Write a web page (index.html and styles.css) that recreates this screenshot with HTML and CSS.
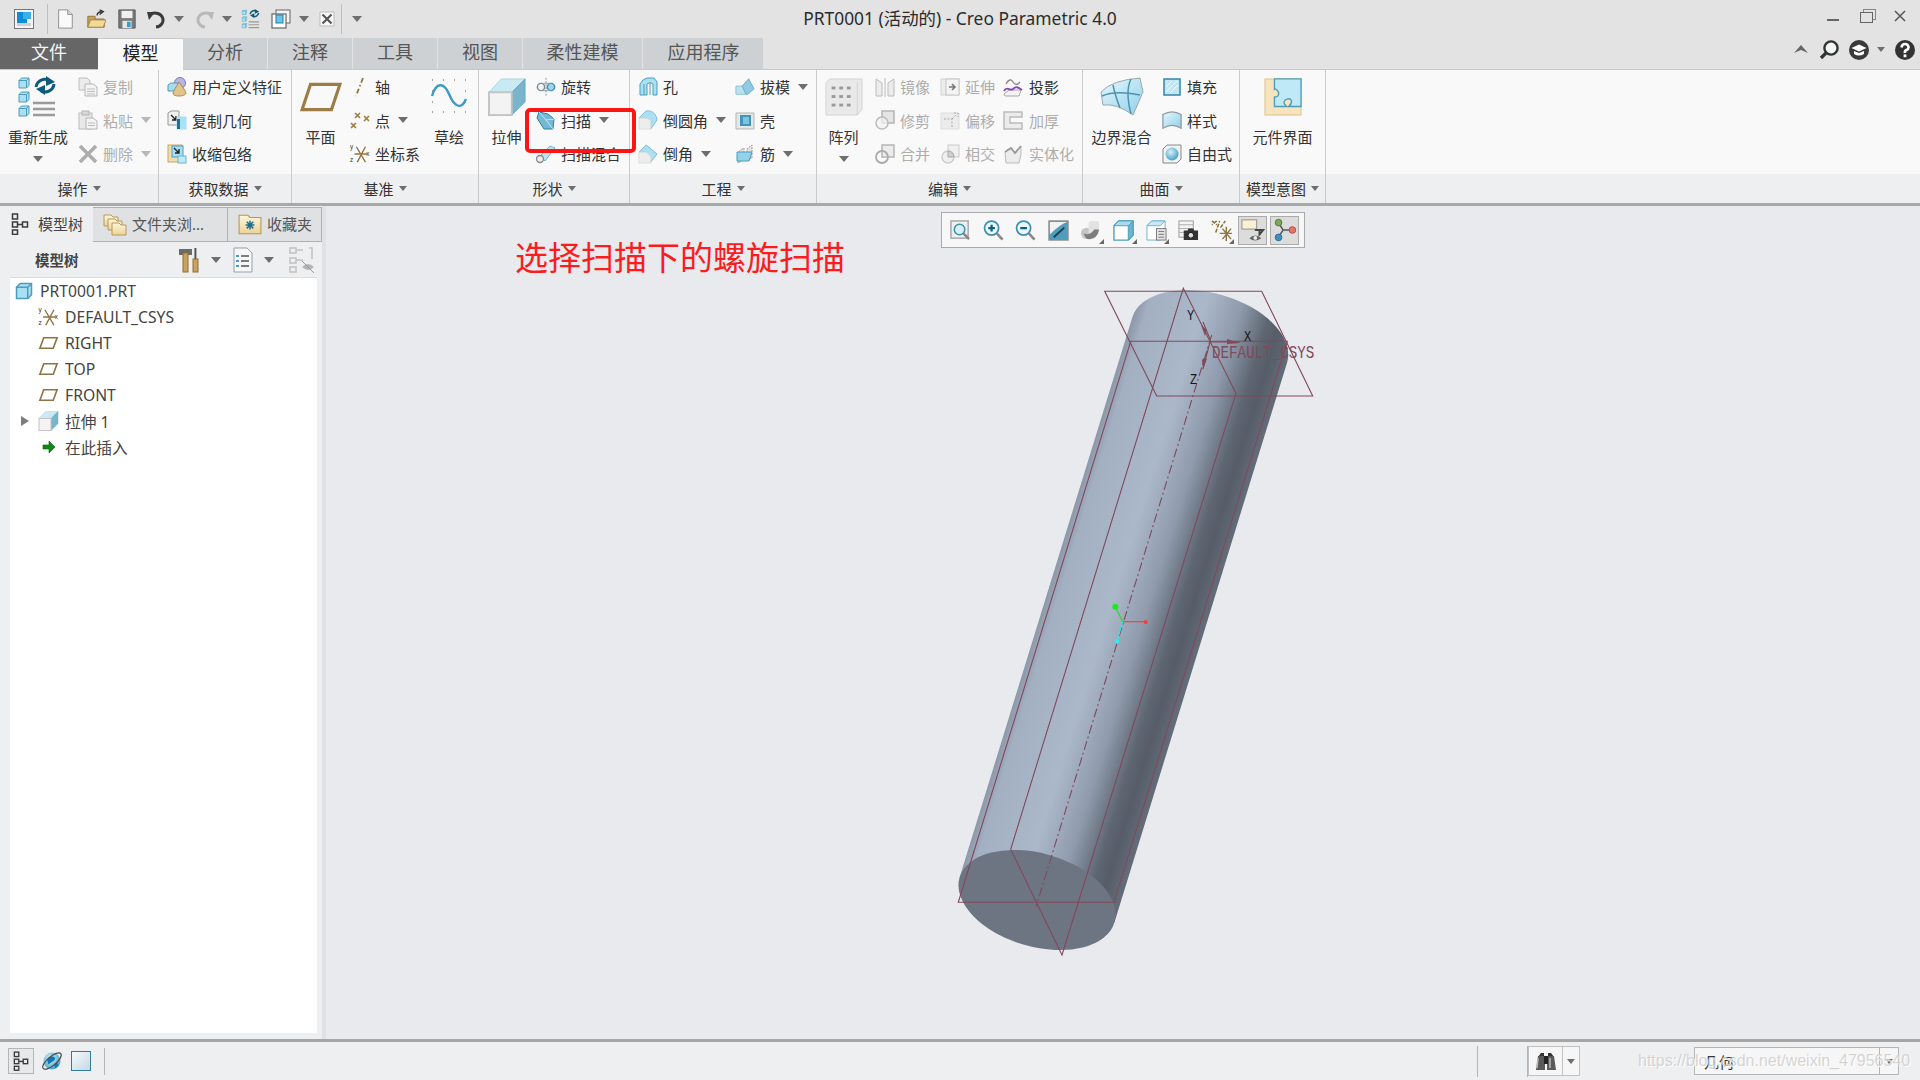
FILE: index.html
```html
<!DOCTYPE html>
<html lang="zh-CN">
<head>
<meta charset="utf-8">
<title>PRT0001 (活动的) - Creo Parametric 4.0</title>
<link rel="stylesheet" href="styles.css">
</head>
<body>
<svg class="sprite" aria-hidden="true">
<defs>
<linearGradient id="gBlue" x1="0" y1="0" x2="1" y2="1"><stop offset="0" stop-color="#e8f7fc"/><stop offset="1" stop-color="#8fd0ea"/></linearGradient>
<linearGradient id="gGray" x1="0" y1="0" x2="1" y2="1"><stop offset="0" stop-color="#f6f6f6"/><stop offset="1" stop-color="#d9d9d9"/></linearGradient>
<linearGradient id="gFolder" x1="0" y1="0" x2="0" y2="1"><stop offset="0" stop-color="#fdf6dc"/><stop offset="1" stop-color="#ecd397"/></linearGradient>
<radialGradient id="gBall" cx=".4" cy=".35" r=".7"><stop offset="0" stop-color="#d8f2fb"/><stop offset="1" stop-color="#3b9cc4"/></radialGradient>
<linearGradient id="cyl" gradientUnits="userSpaceOnUse" x1="959.6" y1="876" x2="1114.4" y2="924">
<stop offset="0" stop-color="#8c97a8"/><stop offset=".07" stop-color="#a3b0c2"/><stop offset=".4" stop-color="#abb8ca"/><stop offset=".62" stop-color="#8f9bac"/><stop offset=".8" stop-color="#5e6672"/><stop offset=".88" stop-color="#565d69"/><stop offset="1" stop-color="#656d7a"/>
</linearGradient>

<symbol id="cube" viewBox="0 0 12 12"><path d="M1 3.5 3.5 1H11V8.5L8.5 11H1Z" fill="#a9e0f4" stroke="#4d9cba"/><path d="M1 3.5H8.5V11M8.5 3.5 11 1" fill="none" stroke="#4d9cba"/></symbol>

<symbol id="regen" viewBox="0 0 42 42"><use href="#cube" x="1" y="1" width="12" height="12"/><use href="#cube" x="1" y="15" width="12" height="12"/><use href="#cube" x="1" y="29" width="12" height="12"/><path d="M16 27H38M16 33H38M16 39H38" stroke="#9a9a9a" stroke-width="2.4"/><path d="M19 11A9 9 0 0 1 33 5" fill="none" stroke="#0f5a78" stroke-width="3"/><path d="M29 0 38 6 29 10Z" fill="#0f5a78"/><path d="M37 8A9 9 0 0 1 24 15" fill="none" stroke="#0f5a78" stroke-width="3"/><path d="M28 19 19 13 28 9Z" fill="#0f5a78"/></symbol>

<symbol id="copy" viewBox="0 0 20 20"><path d="M1 1H9L12 4V13H1Z" fill="#ececec" stroke="#bdbdbd"/><path d="M7 7H15L19 10V19H7Z" fill="#f4f4f4" stroke="#b5b5b5"/><path d="M9 12H17M9 14.5H17M9 17H17" stroke="#bdbdbd"/></symbol>
<symbol id="paste" viewBox="0 0 20 20"><rect x="1" y="3" width="13" height="16" fill="#e8e8e8" stroke="#bdbdbd"/><rect x="4" y="1" width="7" height="4" fill="#d8d8d8" stroke="#b5b5b5"/><path d="M8 8H15L19 11V19H8Z" fill="#f4f4f4" stroke="#b5b5b5"/><path d="M10 13H17M10 15.5H17" stroke="#bdbdbd"/></symbol>
<symbol id="del" viewBox="0 0 20 20"><path d="M2 2 18 18M18 2 2 18" stroke="#acacac" stroke-width="3.4"/></symbol>

<symbol id="udf" viewBox="0 0 20 20"><circle cx="13" cy="6" r="5.5" fill="#b9b5e4" stroke="#7c79b5"/><path d="M1 8 4 6H11V14H1Z" fill="#a9dcf0" stroke="#4d9cba"/><path d="M12 5C9 10 7 13 6 16Q6 19 12 19T19 16C18 13 15 9 12 5Z" fill="#e0c48c" stroke="#a98c52"/></symbol>
<symbol id="copygeo" viewBox="0 0 20 20"><path d="M1 3 4 1H12V15H1Z" fill="#f0f0f0" stroke="#999"/><path d="M4 5 9 10M9 6V10H5" stroke="#222" fill="none" stroke-width="1.4"/><rect x="10" y="7" width="9" height="12" fill="#a9e0f4" stroke="#a9e0f4"/><rect x="10" y="9" width="3" height="10" fill="#1f6f91"/></symbol>
<symbol id="shrink" viewBox="0 0 20 20"><rect x="1" y="1" width="14" height="17" fill="#efdcae" stroke="#c7a868"/><rect x="5" y="2" width="11" height="11" fill="#a9e0f4" stroke="#4d9cba"/><path d="M7 4 12 9M12 5V9H8" stroke="#222" fill="none" stroke-width="1.4"/><rect x="11" y="12" width="8" height="7" fill="#bfeafa" stroke="#6db4d0"/></symbol>

<symbol id="plane" viewBox="0 0 40 28"><path d="M10 2H38L30 26H2Z" fill="none" stroke="#9b7d45" stroke-width="3"/></symbol>
<symbol id="planeS" viewBox="0 0 22 14"><path d="M6 1.5H20L16 12.5H2Z" fill="none" stroke="#8f7443" stroke-width="1.7"/></symbol>
<symbol id="axis" viewBox="0 0 20 20"><path d="M13 1 6 19" stroke="#8f7443" stroke-width="1.8" stroke-dasharray="5 2.5 1.5 2.5" fill="none"/></symbol>
<symbol id="point" viewBox="0 0 20 20"><path d="M5 3 10 8M10 3 5 8M14 6 19 11M19 6 14 11M1 13 6 18M6 13 1 18" stroke="#9b7d45" stroke-width="1.7"/></symbol>
<symbol id="csys" viewBox="0 0 22 22"><path d="M7 3 17 20M17 3 8 20M5 11H19" stroke="#8f7443" stroke-width="1.5" fill="none"/><text x="0" y="6" class="mini">y</text><text x="18" y="13" class="mini">x</text><text x="0" y="20" class="mini">z</text></symbol>
<symbol id="sketch" viewBox="0 0 36 34"><path d="M1 1h1M12 1h1M23 1h1M34 1h1M1 12h1M34 12h1M1 23h1M34 23h1M1 33h1M12 33h1M23 33h1M34 33h1" stroke="#8a8a8a" stroke-width="1.4"/><path d="M1 17C5 3 13 3 18 15S30 32 35 20" fill="none" stroke="#3d9bc4" stroke-width="2.4"/></symbol>

<symbol id="extrude" viewBox="0 0 40 40"><path d="M1 15 14 1H39L25 15Z" fill="#c8eaf5" stroke="#a9d4e2"/><path d="M25 15 39 1V25L25 39Z" fill="#78b5cd" stroke="#6ba8c0"/><rect x="1" y="15" width="24" height="24" fill="#f3f3f3" stroke="#c4c4c4" stroke-width="2"/></symbol>
<symbol id="revolve" viewBox="0 0 22 20"><path d="M11 0V20" stroke="#888" stroke-dasharray="2 1.5"/><circle cx="5.5" cy="10" r="4" fill="#f3f3f3" stroke="#7f8a90" stroke-width="1.6"/><circle cx="16.5" cy="10" r="4" fill="#9ed6ec" stroke="#3d8dad" stroke-width="1.6"/><path d="M5 6H17M5 14H17" stroke="#7fa5b5"/></symbol>
<symbol id="sweep" viewBox="0 0 20 20"><path d="M3 2 12 4 18 9 17 19H8L1 8Z" fill="#74b9d6" stroke="#2d7fa3"/><path d="M3 2 10 10 17 19M10 10 18 9" stroke="#bfe6f4" fill="none"/></symbol>
<symbol id="blend" viewBox="0 0 20 20"><path d="M4 12 14 2 19 4 9 17Z" fill="#bfe2ef" stroke="#7fb0c4"/><circle cx="4" cy="15" r="3.5" fill="#eee" stroke="#8a8a8a" stroke-width="1.4"/></symbol>

<symbol id="hole" viewBox="0 0 20 20"><path d="M5 3 9 1H16L19 5V18H15V7Q12 4 9 7V18H2V7Z" fill="#a9e0f4" stroke="#4d9cba"/><path d="M6 7V18M12 6V18" stroke="#4d9cba"/></symbol>
<symbol id="draft" viewBox="0 0 22 20"><path d="M1 9H12V18H1Z" fill="#b9e3f2" stroke="#8cc1d6"/><path d="M8 9 15 1 21 12 14 18 12 18Z" fill="#8fcbe2" stroke="#6ea9c2"/></symbol>
<symbol id="round" viewBox="0 0 22 22"><path d="M1 9 9 1H13Q20 3 21 11L14 21V13Q13 9 9 9Z" fill="#a9e0f4" stroke="#7fb6cc"/><path d="M1 9H9Q13 9 14 13V21H1Z" fill="#ededed" stroke="#ddd"/></symbol>
<symbol id="shell" viewBox="0 0 20 20"><path d="M1 3H19V19H1Z" fill="#e6e6e6" stroke="#b5b5b5"/><rect x="5" y="5" width="11" height="11" fill="#3f97bf"/><rect x="8" y="7" width="6" height="7" fill="#7fc4de"/></symbol>
<symbol id="chamfer" viewBox="0 0 22 22"><path d="M1 9 9 1 21 11 14 20 9 9Z" fill="#a9e0f4" stroke="#7fb6cc"/><path d="M1 9H9L14 14V21H1Z" fill="#ededed" stroke="#ddd"/></symbol>
<symbol id="rib" viewBox="0 0 20 20"><path d="M3 19V8L9 4V15ZM17 14V1L12 5V16Z" fill="#e4e4e4" stroke="#9a9a9a" stroke-dasharray="2 1"/><path d="M2 8H17L14 17H2Z" fill="#92d3ec" stroke="#4d9cba"/></symbol>

<symbol id="pattern" viewBox="0 0 40 40"><path d="M1 5 5 1H39V33L34 39H1Z" fill="#e9e9e9" stroke="#d4d4d4"/><path d="M34 5V39" stroke="#d2d2d2"/><g fill="#9a9a9a"><rect x="7" y="9" width="4" height="3"/><rect x="15" y="9" width="4" height="3"/><rect x="23" y="9" width="4" height="3"/><rect x="7" y="18" width="4" height="3"/><rect x="15" y="18" width="4" height="3"/><rect x="23" y="18" width="4" height="3"/><rect x="7" y="27" width="4" height="3"/><rect x="15" y="27" width="4" height="3"/><rect x="23" y="27" width="4" height="3"/></g></symbol>
<symbol id="mirror" viewBox="0 0 20 20"><path d="M1 2 7 6V19H1ZM19 2 13 6V19H19Z" fill="#ececec" stroke="#bbb"/><path d="M10 1V20" stroke="#bbb"/></symbol>
<symbol id="extend" viewBox="0 0 20 20"><rect x="1" y="2" width="18" height="16" fill="#ececec" stroke="#d4d4d4"/><rect x="6" y="2" width="13" height="16" fill="#f4f4f4" stroke="#c4c4c4"/><path d="M9 10H15M12 7 15 10 12 13" stroke="#777" fill="none" stroke-width="1.6"/></symbol>
<symbol id="project" viewBox="0 0 20 20"><path d="M1 17 6 13H18L16 19H2Z" fill="#f4f4f4" stroke="#a5a5a5"/><path d="M1 14C4 8 7 15 10 12S15 10 19 13" fill="none" stroke="#8a4ab5" stroke-width="1.8"/><path d="M3 7Q7 0 10 5T17 5" fill="none" stroke="#8a8a8a" stroke-width="1.4"/></symbol>
<symbol id="trim" viewBox="0 0 20 20"><rect x="7" y="1" width="12" height="12" fill="#e4e4e4" stroke="#b5b5b5" stroke-width="1.5"/><circle cx="7" cy="13" r="6" fill="#f4f4f4" fill-opacity=".7" stroke="#bbb" stroke-width="1.5"/></symbol>
<symbol id="offset" viewBox="0 0 20 20"><path d="M1 3H19V19H1Z" fill="#ececec" stroke="#ddd"/><path d="M4 9 H12V18M12 9 17 4M14 3H18V7" fill="none" stroke="#aaa" stroke-dasharray="2 1.5"/></symbol>
<symbol id="thicken" viewBox="0 0 20 20"><path d="M1 2H19V7H7V13H19V19H1Z" fill="#ececec" stroke="#bbb" stroke-width="1.5"/></symbol>
<symbol id="merge" viewBox="0 0 20 20"><rect x="7" y="1" width="12" height="12" fill="#ececec" stroke="#b5b5b5" stroke-width="1.5"/><circle cx="7" cy="13" r="6" fill="none" stroke="#aaa" stroke-width="1.8"/></symbol>
<symbol id="intersect" viewBox="0 0 20 20"><rect x="8" y="1" width="11" height="12" fill="#f0f0f0" stroke="#ccc"/><circle cx="8" cy="13" r="6" fill="#f0f0f0" stroke="#ccc" stroke-width="1.4"/><path d="M8 7A6 6 0 0 1 14 13H8Z" fill="#d0d0d0" stroke="#aaa"/></symbol>
<symbol id="solidify" viewBox="0 0 20 20"><path d="M2 8 8 4 12 9 18 2V10L16 19H3Z" fill="#ececec" stroke="#bbb"/><path d="M2 8 8 4 12 9 18 2" fill="none" stroke="#999" stroke-width="1.8"/></symbol>

<symbol id="boundary" viewBox="0 0 44 40"><path d="M1 15Q12 3 40 1L43 15 33 38Q16 26 3 28Z" fill="url(#gBlue)" stroke="#9aa9ae"/><path d="M2 19Q15 13 40 18M13 8Q15 18 20 31M31 2Q25 14 31 37" fill="none" stroke="#4d93b0" stroke-width="1.5"/></symbol>
<symbol id="fillS" viewBox="0 0 20 20"><rect x="2" y="2" width="16" height="16" fill="#bfe7f5" stroke="#3d8dad" stroke-width="1.6"/><path d="M4 10 10 4M4 15 15 4M8 16 16 8" stroke="#f1fbff"/></symbol>
<symbol id="style" viewBox="0 0 22 22"><path d="M1 5Q11-1 21 5V20Q11 14 1 20Z" fill="url(#gBlue)" stroke="#8d9ba2" stroke-width="1.4"/></symbol>
<symbol id="free" viewBox="0 0 20 20"><path d="M1 5 5 1H19V15L15 19H1Z" fill="#f2f2f2" stroke="#888"/><circle cx="10" cy="10" r="6.5" fill="url(#gBall)"/></symbol>
<symbol id="comp" viewBox="0 0 40 40"><rect x="1" y="1" width="38" height="38" fill="#f5e4bd" stroke="#dcc28a"/><path d="M11 1H39V30H26C31 26 29 21 25 22S19 26 24 30H11V20C15 21 17 16 14 13S11 11 11 13Z" fill="#bfe9f6" stroke="#4d9cba" stroke-width="1.4"/></symbol>

<symbol id="app" viewBox="0 0 20 20"><rect x=".5" y=".5" width="19" height="19" fill="#f4f4f4" stroke="#777"/><rect x="3" y="3" width="10" height="11" fill="#0d8dd6"/><rect x="9" y="3" width="8" height="7" fill="#39b0ea"/><path d="M3 14H17V17H3Z" fill="#cfcfcf"/></symbol>
<symbol id="new" viewBox="0 0 20 22"><path d="M3 1H13L18 6V21H3Z" fill="#fafafa" stroke="#8a8a8a"/><path d="M13 1V6H18" fill="#ddd" stroke="#8a8a8a"/></symbol>
<symbol id="open" viewBox="0 0 22 22"><path d="M2 8H10V11H20V20H2Z" fill="#c69f5a" stroke="#8f6f35"/><path d="M5 12H22L19 20H2Z" fill="#f3d996" stroke="#a5844a"/><path d="M12 7Q13 3 17 3M15 1 19 3 15 6" fill="none" stroke="#333" stroke-width="1.5"/></symbol>
<symbol id="save" viewBox="0 0 20 22"><path d="M1 1H19V21H1Z" fill="#7a7a7a" stroke="#555"/><rect x="4" y="2" width="12" height="8" fill="#f0f0f0"/><rect x="5" y="13" width="10" height="8" fill="#e6e6e6"/><rect x="10" y="14" width="4" height="6" fill="#3d9bc4"/></symbol>
<symbol id="undo" viewBox="0 0 20 20"><path d="M4 5A8 7 0 1 1 9 18" fill="none" stroke="#3b3b3b" stroke-width="3"/><path d="M0 3H8L2 11Z" fill="#3b3b3b"/></symbol>
<symbol id="redo" viewBox="0 0 20 20"><path d="M16 5A8 7 0 1 0 11 18" fill="none" stroke="#b9b9b9" stroke-width="3"/><path d="M20 3H12L18 11Z" fill="#b9b9b9"/></symbol>
<symbol id="window" viewBox="0 0 20 20"><rect x="5" y="1" width="14" height="13" fill="#f4f4f4" stroke="#666"/><rect x="1" y="5" width="14" height="14" fill="#fff" stroke="#666" stroke-width="1.2"/><rect x="5" y="6" width="7" height="8" fill="#6ec3e6" stroke="#1f7da5"/></symbol>
<symbol id="closeW" viewBox="0 0 16 16"><path d="M1 1H15V15H1Z" fill="#f8f8f8" stroke="#bbb"/><path d="M3.5 3.5 12.5 12.5M12.5 3.5 3.5 12.5" stroke="#555" stroke-width="2.2"/></symbol>
<symbol id="search" viewBox="0 0 20 20"><circle cx="12" cy="8" r="6.6" fill="#f3f6f7" stroke="#333" stroke-width="2.4"/><path d="M7 13 2 18" stroke="#333" stroke-width="3.2"/></symbol>
<symbol id="hat" viewBox="0 0 20 20"><circle cx="10" cy="10" r="10" fill="#3a3a3a"/><path d="M2.5 8 10 4.5 17.5 8 10 11.5Z" fill="#fff"/><path d="M5 11V14Q10 17 15 14V11L10 13Z" fill="#fff"/></symbol>
<symbol id="help" viewBox="0 0 20 20"><circle cx="10" cy="10" r="10" fill="#333"/><path d="M6.5 7.5Q7 4 10 4T13.6 7.2Q13.6 9 11.5 10T10 13" fill="none" stroke="#fff" stroke-width="2.6"/><rect x="8.6" y="14.4" width="2.8" height="2.8" fill="#fff"/></symbol>

<symbol id="treeI" viewBox="0 0 18 22"><g fill="none" stroke="#3a3a3a" stroke-width="1.5"><rect x="1.5" y="1" width="5" height="5"/><rect x="1.5" y="9" width="5" height="5"/><rect x="1.5" y="17" width="5" height="4.4"/><rect x="11.5" y="9" width="5" height="5"/><path d="M6.5 11.5H11.5"/></g></symbol>
<symbol id="folders" viewBox="0 0 24 24"><path d="M1 3H8L10 5H15V14H1Z" fill="url(#gFolder)" stroke="#b5985d"/><path d="M5 7H12L14 9H19V18H5Z" fill="url(#gFolder)" stroke="#b5985d"/><path d="M9 11H16L18 13H23V23H9Z" fill="url(#gFolder)" stroke="#b5985d"/></symbol>
<symbol id="favF" viewBox="0 0 22 20"><path d="M1 2H9L11 4H21V19H1Z" fill="url(#gFolder)" stroke="#b5985d"/><path d="M11 7V15M7 11H15M8 8 14 14M14 8 8 14" stroke="#1f6d91" stroke-width="1.4"/></symbol>
<symbol id="tools" viewBox="0 0 22 26"><path d="M1 2H14V8H1Z" fill="#6b6b6b"/><rect x="5" y="6" width="5" height="19" fill="#c9a25f" stroke="#8f6f35"/><rect x="16.4" y="1" width="2" height="12" fill="#555"/><rect x="15" y="12" width="5" height="13" fill="#c9a25f" stroke="#8f6f35"/></symbol>
<symbol id="listI" viewBox="0 0 20 26"><path d="M1 1H14L19 6V25H1Z" fill="#f7f7f7" stroke="#8fa3ad"/><path d="M8 9H16M8 14H16M8 19H16" stroke="#555" stroke-width="1.3"/><path d="M3 9H6M3 14H6M3 19H6" stroke="#4d9cba" stroke-width="2"/></symbol>
<symbol id="treeEye" viewBox="0 0 26 26"><g fill="none" stroke="#c4c4c4" stroke-width="1.6"><rect x="1" y="1" width="6" height="5"/><rect x="1" y="11" width="6" height="5"/><rect x="1" y="20" width="6" height="5"/><path d="M7 3H14M7 13H14M20 1H23V12"/></g><path d="M13 20Q19 14 25 20Q19 26 13 20Z" fill="#b5b5b5"/><path d="M13 14 25 26" stroke="#999"/></symbol>
<symbol id="arrowIns" viewBox="0 0 14 14"><path d="M1 5H7V1L13 7 7 13V9H1Z" fill="#0c8a16" stroke="#065b0c" stroke-width=".6"/></symbol>

<symbol id="zFit" viewBox="0 0 22 22"><rect x="1" y="1" width="18" height="18" fill="#eef0f2" stroke="#a9a9a9" stroke-width="1.6"/><circle cx="10" cy="10" r="5.5" fill="#d8f0f9" stroke="#3e8fb0" stroke-width="1.6"/><path d="M14 14 20 20" stroke="#888" stroke-width="2.6"/></symbol>
<symbol id="zIn" viewBox="0 0 22 22"><circle cx="9" cy="8.5" r="7.4" fill="#eaf7fc" stroke="#3e8fb0" stroke-width="1.8"/><path d="M5.5 8.5H12.5M9 5V12" stroke="#0c5f86" stroke-width="2.4"/><path d="M14.5 14 20.5 20.5" stroke="#888" stroke-width="2.6"/></symbol>
<symbol id="zOut" viewBox="0 0 22 22"><circle cx="9" cy="8.5" r="7.4" fill="#eaf7fc" stroke="#3e8fb0" stroke-width="1.8"/><path d="M5.5 8.5H12.5" stroke="#0c5f86" stroke-width="2.4"/><path d="M14.5 14 20.5 20.5" stroke="#888" stroke-width="2.6"/></symbol>
<symbol id="repaint" viewBox="0 0 22 22"><rect x="1" y="1" width="20" height="20" fill="#4f9dbb" stroke="#8e8e8e" stroke-width="1.4"/><path d="M2 2H20Q12 5 2 15Z" fill="#f2f2f2"/><path d="M6 18 17 8" stroke="#173f52" stroke-width="2"/></symbol>
<symbol id="shade" viewBox="0 0 22 22"><circle cx="7" cy="14" r="6" fill="#c4c4c4"/><rect x="9" y="1" width="11" height="14" rx="3" fill="#e2e2e2"/><path d="M4 14Q10 17 15 10L20 10Q18 21 8 20Q5 19 4 14Z" fill="#7c7c7c"/></symbol>
<symbol id="vCube" viewBox="0 0 22 22"><path d="M1 6 6 1H21V16L16 21H1Z" fill="#fff" stroke="#4d9cba" stroke-width="1.4"/><path d="M1 6 6 1H21L16 6Z" fill="#a9dcf0" stroke="#4d9cba"/><path d="M16 6 21 1V16L16 21Z" fill="#6db4d0" stroke="#4d9cba"/></symbol>
<symbol id="vSaved" viewBox="0 0 22 22"><path d="M1 6 6 1H20V16L15 21H1Z" fill="#fff" stroke="#6db4d0"/><path d="M1 6 6 1H20L15 6Z" fill="#c8eaf5" stroke="#6db4d0"/><rect x="11" y="9" width="10" height="12" fill="#e4e4e4" stroke="#777"/><path d="M13 12H19M13 15H19M13 18H19" stroke="#777"/></symbol>
<symbol id="camera" viewBox="0 0 22 22"><rect x="1" y="1" width="15" height="17" fill="#f4f4f4" stroke="#999"/><path d="M1 5H16M1 9H16M1 13H16" stroke="#aaa"/><path d="M6 11H10L11 9H16L17 11H21V21H6Z" fill="#333"/><circle cx="13.5" cy="16" r="3" fill="#ddd" stroke="#111"/></symbol>
<symbol id="datum" viewBox="0 0 22 22"><path d="M1 1 6 5M6 1 1 5M5 13 9 1M10 8 15 1" stroke="#8f7443" stroke-width="1.7" stroke-dasharray="4 1.5" fill="none"/><path d="M12 9 21 20M21 9 12 20M9 14H22M16 7V22" stroke="#8f7443" stroke-width="1.5"/></symbol>
<symbol id="annot" viewBox="0 0 26 26"><rect x="1" y="2" width="16" height="10" fill="#f8f0d2" stroke="#8a8a8a"/><path d="M15 13H24L20 18V14" fill="none" stroke="#444" stroke-width="2"/><path d="M9 22Q15 16 22 22Q15 27 9 22Z" fill="#666"/><circle cx="15.5" cy="21.6" r="2" fill="#eee"/></symbol>
<symbol id="spin" viewBox="0 0 26 26"><path d="M5 4 11 13 5 22M11 13H22" fill="none" stroke="#555" stroke-width="1.6"/><circle cx="6" cy="5" r="3.6" fill="#7fa658" stroke="#4e7a2f"/><circle cx="21" cy="13" r="3.6" fill="#e2746d" stroke="#b24a44"/><circle cx="6" cy="21" r="3.6" fill="#3f8fc0" stroke="#28688f"/></symbol>

<symbol id="globe" viewBox="0 0 22 22"><circle cx="11" cy="11" r="8.5" fill="url(#gBall)"/><path d="M6 9Q10 5 13 7T11 12 7 14ZM13 14Q16 12 17 14T14 18Z" fill="#0f79b3"/><ellipse cx="11" cy="11" rx="11.5" ry="4.4" transform="rotate(-40 11 11)" fill="none" stroke="#4a4a4a" stroke-width="1.2"/></symbol>
<symbol id="binoc" viewBox="0 0 22 20"><path d="M3 6H9V2H6ZM19 6H13V2H16Z" fill="#333"/><path d="M3 5H10V19H1Z" fill="#5a5a5a"/><path d="M12 5H19L21 19H12Z" fill="#5a5a5a"/><rect x="9" y="5" width="4" height="8" fill="#222"/><path d="M3 7 2 17" stroke="#bbb" stroke-width="1.5"/><path d="M15 7 15 17" stroke="#bbb" stroke-width="1.5"/></symbol>
</defs>
</svg>

<div class="app">
  <header class="titlebar">
    <div class="qat">
      <svg class="qi qa"><use href="#app"/></svg><span class="vsep vs1"></span>
      <svg class="qi q1"><use href="#new"/></svg>
      <svg class="qi q2"><use href="#open"/></svg>
      <svg class="qi q3"><use href="#save"/></svg>
      <svg class="qi q4"><use href="#undo"/></svg><i class="caret cq1"></i>
      <svg class="qi q5"><use href="#redo"/></svg><i class="caret cq2"></i>
      <svg class="qi q6"><use href="#regen"/></svg>
      <svg class="qi q7"><use href="#window"/></svg><i class="caret cq3"></i>
      <svg class="qi q8"><use href="#closeW"/></svg><span class="vsep vs2"></span>
      <i class="caret cq4"></i>
    </div>
    <div class="title">PRT0001 (活动的) - Creo Parametric 4.0</div>
    <div class="winbtns">
      <span class="w-min"></span>
      <span class="w-max"></span>
      <svg class="w-close" viewBox="0 0 12 12"><path d="M1 1 11 11M11 1 1 11" stroke="#555" stroke-width="1.5"/></svg>
    </div>
  </header>

  <nav class="tabbar">
    <div class="tab file">文件</div>
    <div class="tab active">模型</div>
    <div class="tab">分析</div>
    <div class="tab">注释</div>
    <div class="tab">工具</div>
    <div class="tab">视图</div>
    <div class="tab wide">柔性建模</div>
    <div class="tab wide last">应用程序</div>
    <div class="tabtools">
      <svg class="t-up" viewBox="0 0 14 8"><path d="M0 8 7 0 14 8 7 5Z" fill="#666"/></svg>
      <svg class="t-ic"><use href="#search"/></svg>
      <svg class="t-ic t-hat"><use href="#hat"/></svg>
      <i class="caret t-car"></i>
      <svg class="t-ic"><use href="#help"/></svg>
    </div>
  </nav>

  <section class="ribbon">
    <div class="group g1">
      <div class="g-body">
        <div class="large w75"><svg class="lg"><use href="#regen"/></svg><span class="lab">重新生成</span><i class="caret lc"></i></div>
        <div class="col ml3 dis">
          <div class="row"><svg class="s"><use href="#copy"/></svg>复制</div>
          <div class="row"><svg class="s"><use href="#paste"/></svg>粘贴<i class="caret"></i></div>
          <div class="row"><svg class="s"><use href="#del"/></svg>删除<i class="caret"></i></div>
        </div>
      </div>
      <div class="g-label">操作<i class="caret"></i></div>
    </div>
    <div class="group g2">
      <div class="g-body">
        <div class="col ml8">
          <div class="row"><svg class="s"><use href="#udf"/></svg>用户定义特征</div>
          <div class="row"><svg class="s"><use href="#copygeo"/></svg>复制几何</div>
          <div class="row"><svg class="s"><use href="#shrink"/></svg>收缩包络</div>
        </div>
      </div>
      <div class="g-label">获取数据<i class="caret"></i></div>
    </div>
    <div class="group g3">
      <div class="g-body">
        <div class="large w57"><svg class="lg plane"><use href="#plane"/></svg><span class="lab">平面</span></div>
        <div class="col ml1 w72">
          <div class="row"><svg class="s"><use href="#axis"/></svg>轴</div>
          <div class="row"><svg class="s"><use href="#point"/></svg>点<i class="caret"></i></div>
          <div class="row"><svg class="s"><use href="#csys"/></svg>坐标系</div>
        </div>
        <div class="large w54"><svg class="lg skt"><use href="#sketch"/></svg><span class="lab">草绘</span></div>
      </div>
      <div class="g-label">基准<i class="caret"></i></div>
    </div>
    <div class="group g4">
      <div class="g-body">
        <div class="large w55"><svg class="lg ex"><use href="#extrude"/></svg><span class="lab">拉伸</span></div>
        <div class="col ml2">
          <div class="row"><svg class="s"><use href="#revolve"/></svg>旋转</div>
          <div class="row"><svg class="s"><use href="#sweep"/></svg>扫描<i class="caret"></i></div>
          <div class="row"><svg class="s"><use href="#blend"/></svg>扫描混合</div>
        </div>
      </div>
      <div class="g-label">形状<i class="caret"></i></div>
    </div>
    <div class="group g5">
      <div class="g-body">
        <div class="col ml8 w97">
          <div class="row"><svg class="s"><use href="#hole"/></svg>孔</div>
          <div class="row"><svg class="s"><use href="#round"/></svg>倒圆角<i class="caret"></i></div>
          <div class="row"><svg class="s"><use href="#chamfer"/></svg>倒角<i class="caret"></i></div>
        </div>
        <div class="col">
          <div class="row"><svg class="s"><use href="#draft"/></svg>拔模<i class="caret"></i></div>
          <div class="row"><svg class="s"><use href="#shell"/></svg>壳</div>
          <div class="row"><svg class="s"><use href="#rib"/></svg>筋<i class="caret"></i></div>
        </div>
      </div>
      <div class="g-label">工程<i class="caret"></i></div>
    </div>
    <div class="group g6">
      <div class="g-body">
        <div class="large w53"><svg class="lg ex"><use href="#pattern"/></svg><span class="lab">阵列</span><i class="caret lc"></i></div>
        <div class="col ml5 w65 dis">
          <div class="row"><svg class="s"><use href="#mirror"/></svg>镜像</div>
          <div class="row"><svg class="s"><use href="#trim"/></svg>修剪</div>
          <div class="row"><svg class="s"><use href="#merge"/></svg>合并</div>
        </div>
        <div class="col w63 dis">
          <div class="row"><svg class="s"><use href="#extend"/></svg>延伸</div>
          <div class="row"><svg class="s"><use href="#offset"/></svg>偏移</div>
          <div class="row"><svg class="s"><use href="#intersect"/></svg>相交</div>
        </div>
        <div class="col dis">
          <div class="row on"><svg class="s s-wide"><use href="#project"/></svg>投影</div>
          <div class="row"><svg class="s s-wide"><use href="#thicken"/></svg>加厚</div>
          <div class="row"><svg class="s s-wide"><use href="#solidify"/></svg>实体化</div>
        </div>
      </div>
      <div class="g-label">编辑<i class="caret"></i></div>
    </div>
    <div class="group g7">
      <div class="g-body">
        <div class="large w77"><svg class="lg bnd"><use href="#boundary"/></svg><span class="lab">边界混合</span></div>
        <div class="col ml2">
          <div class="row"><svg class="s"><use href="#fillS"/></svg>填充</div>
          <div class="row"><svg class="s"><use href="#style"/></svg>样式</div>
          <div class="row"><svg class="s"><use href="#free"/></svg>自由式</div>
        </div>
      </div>
      <div class="g-label">曲面<i class="caret"></i></div>
    </div>
    <div class="group g8">
      <div class="g-body">
        <div class="large w85"><svg class="lg ex"><use href="#comp"/></svg><span class="lab">元件界面</span></div>
      </div>
      <div class="g-label">模型意图<i class="caret"></i></div>
    </div>
    <div class="group gfill">
      <div class="g-body"></div>
      <div class="g-label"></div>
    </div>
    <div class="redbox"></div>
  </section>

  <main class="main">
    <aside class="panel">
      <div class="ptabs">
        <div class="ptab cur pt1"><svg class="pi"><use href="#treeI"/></svg>模型树</div>
        <div class="ptab pt2"><svg class="pi2"><use href="#folders"/></svg>文件夹浏...</div>
        <div class="ptab pt3"><svg class="pi2"><use href="#favF"/></svg>收藏夹</div>
      </div>
      <div class="phead">
        <span class="phtitle">模型树</span>
        <svg class="ph1"><use href="#tools"/></svg><i class="caret"></i>
        <svg class="ph2"><use href="#listI"/></svg><i class="caret"></i>
        <svg class="ph3"><use href="#treeEye"/></svg>
      </div>
      <div class="tree">
        <div class="node root"><svg class="ni-r"><use href="#cube"/></svg>PRT0001.PRT</div>
        <div class="node"><svg class="ni"><use href="#csys"/></svg>DEFAULT_CSYS</div>
        <div class="node"><svg class="ni"><use href="#planeS"/></svg>RIGHT</div>
        <div class="node"><svg class="ni"><use href="#planeS"/></svg>TOP</div>
        <div class="node"><svg class="ni"><use href="#planeS"/></svg>FRONT</div>
        <div class="node exp"><i class="tri"></i><svg class="ni"><use href="#extrude"/></svg>拉伸 1</div>
        <div class="node"><svg class="ins"><use href="#arrowIns"/></svg>在此插入</div>
      </div>
    </aside>
    <div class="splitter"></div>
    <section class="viewport">
      <svg class="scene" viewBox="326 206 1594 833" width="1594" height="833">
        <path d="M959.5 877.8 1132.2 317.8A80.6 46.6 16 0 1 1287.2 362.2L1114.5 922.2Z" fill="url(#cyl)"/>
        <ellipse cx="1037" cy="900" rx="80.6" ry="46.6" transform="rotate(16 1037 900)" fill="#6d7582"/>
        <g class="wire">
          <path d="M1104.7 291.3H1261.7L1312.7 396H1156.7Z"/>
          <path d="M1183.3 288.3 1236 393.3 1062 955 1010.7 849.3Z"/>
          <path d="M1130.7 341.3H1287.3L1114 902.3H958.3Z"/>
          <path class="dash" d="M1211.7 335 1036 906.7"/>
          <path d="M1203 322 1210 339M1210 342H1240M1210 342 1203 369"/>
        </g>
        <path class="arrowh" d="M1201 325 1207 330 1205 336ZM1227 339 1240 343 1227 344ZM1204 358 1207 359 1203 369 1202 360Z"/>
        <text class="ax" transform="translate(1187 320) scale(.8 1)">Y</text>
        <text class="ax" transform="translate(1244 341) scale(.8 1)">X</text>
        <text class="ax" transform="translate(1190 384) scale(.8 1)">Z</text>
        <text class="dl" transform="translate(1212 358) scale(.79 1)">DEFAULT_CSYS</text>
        <path d="M1122.7 621.7 1115.3 606.7" stroke="#2fd92f" stroke-width="1.2"/>
        <path d="M1122.7 621.7H1145.7" stroke="#f24141" stroke-width="1.2"/>
        <path d="M1122.7 621.7 1117 641" stroke="#2fe6ea" stroke-width="1.2"/>
        <circle cx="1115.3" cy="606.7" r="3" fill="#1fe81f"/>
        <circle cx="1145.7" cy="622" r="2" fill="#f43c3c"/>
        <circle cx="1117" cy="641" r="2.3" fill="#25f0f4"/>
      </svg>
      <div class="toolbar">
        <svg class="tb"><use href="#zFit"/></svg>
        <svg class="tb"><use href="#zIn"/></svg>
        <svg class="tb"><use href="#zOut"/></svg>
        <svg class="tb"><use href="#repaint"/></svg>
        <span class="tbw"><svg class="tb"><use href="#shade"/></svg><i class="corner"></i></span>
        <span class="tbw"><svg class="tb"><use href="#vCube"/></svg><i class="corner"></i></span>
        <span class="tbw"><svg class="tb"><use href="#vSaved"/></svg><i class="corner"></i></span>
        <svg class="tb"><use href="#camera"/></svg>
        <span class="tbw"><svg class="tb"><use href="#datum"/></svg><i class="corner"></i></span>
        <span class="press"><svg class="tbp"><use href="#annot"/></svg></span>
        <span class="press p2"><svg class="tbp"><use href="#spin"/></svg></span>
      </div>
      <div class="note">选择扫描下的螺旋扫描</div>
    </section>
  </main>

  <footer class="status">
    <span class="st-press"><svg class="st-i"><use href="#treeI"/></svg></span>
    <svg class="st-g"><use href="#globe"/></svg>
    <span class="st-sq"></span>
    <span class="st-sep"></span>
    <span class="st-sep2"></span>
    <span class="st-sep3"></span>
    <span class="finder"><svg class="st-b"><use href="#binoc"/></svg><span class="fd"><i class="caret"></i></span></span>
    <span class="combo"><span class="ctext">几何</span><span class="cbtn"><i class="caret"></i></span></span>
    <span class="mark">https://blog.csdn.net/weixin_47956540</span>
  </footer>
</div>
</body>
</html>
```
FILE: styles.css
```css
* { box-sizing: border-box; }
html, body { margin: 0; padding: 0; }
body {
  width: 1920px; height: 1080px; overflow: hidden;
  font-family: "Noto Sans", "Noto Sans CJK SC", sans-serif;
  color: #333; background: #e8eaee;
}
.sprite { position: absolute; width: 0; height: 0; }
.mini { font: 7px "Liberation Sans", sans-serif; fill: #333; }
.app { display: flex; flex-direction: column; width: 1920px; height: 1080px; }

.caret {
  display: inline-block; width: 0; height: 0; margin-left: 8px;
  border-left: 5px solid transparent; border-right: 5px solid transparent;
  border-top: 6px solid #6e6e6e; flex: none;
}

/* title bar */
.titlebar { height: 38px; background: #e3e3e3; display: grid; grid-template-columns: 1fr auto 1fr; align-items: center; flex: none; }
.qat { display: flex; align-items: center; height: 36px; padding-left: 14px; }
.qi { width: 20px; height: 20px; flex: none; }
.vsep { width: 1px; height: 30px; background: #bdbdbd; flex: none; }
.vs1 { margin-left: 13px; }
.q1 { margin-left: 7px; }
.q2 { margin-left: 11px; }
.q3 { margin-left: 11px; }
.q4 { margin-left: 10px; }
.cq1 { margin-left: 7px; }
.q5 { margin-left: 10px; }
.cq2 { margin-left: 8px; }
.q6 { margin-left: 9px; }
.q7 { margin-left: 10px; }
.cq3 { margin-left: 8px; }
.q8 { margin-left: 10px; width: 16px; height: 16px; }
.vs2 { margin-left: 6px; }
.cq4 { margin-left: 10px; }
.title { font-size: 17.4px; color: #2b2b2b; line-height: 34px; white-space: nowrap; margin-bottom: 2px; }
.winbtns { display: flex; justify-content: flex-end; align-items: center; height: 38px; padding-right: 14px; }
.w-min { width: 12px; height: 2px; background: #666; margin-top: 2px; }
.w-max { width: 13px; height: 11px; margin-left: 21px; margin-top: -4px; border: 1px solid #666; box-shadow: 3px -3px 0 -1px #e3e3e3, 3px -3px 0 0 #888; }
.w-close { width: 12px; height: 12px; margin-left: 21px; margin-top: -6px; }

/* tabs */
.tabbar { display: flex; height: 32px; background: #e3e3e3; border-bottom: 1px solid #c8c8c8; flex: none; }
.tab { width: 85px; background: #ced1d3; color: #555; font-size: 18px; line-height: 29px; text-align: center; border-right: 1px solid #e3e3e3; }
.tab.file { width: 98px; background: #666; color: #f4f4f4; border: 0; }
.tab.active { background: #f9f9f9; color: #222; border-top: 1px solid #c8c8c8; border-right: 0; margin-bottom: -1px; position: relative; }
.tab.wide { width: 120px; }
.tab.last { width: 121px; padding-left: 1px; }
.tabtools { margin-left: auto; display: flex; align-items: flex-start; padding: 2px 5px 0 0; }
.t-up { width: 14px; height: 8px; margin-top: 5px; margin-right: 11px; }
.t-ic { width: 20px; height: 20px; }
.t-hat { margin-left: 10px; }
.t-car { margin: 7px 10px 0 8px; border-left-width: 4px; border-right-width: 4px; border-top-width: 5px; }

/* ribbon */
.ribbon { display: flex; height: 136px; background: #f9f9f9; border-bottom: 3px solid #a9a9a9; position: relative; flex: none; }
.group { display: flex; flex-direction: column; height: 133px; border-right: 1px solid #cbcbcb; flex: none; }
.g1 { width: 159px; } .g2 { width: 133px; } .g3 { width: 187px; } .g4 { width: 151px; }
.g5 { width: 187px; } .g6 { width: 266px; } .g7 { width: 157px; } .g8 { width: 86px; }
.gfill { flex: 1; border-right: 0; }
.g-body { flex: 1; display: flex; min-height: 0; }
.g-label { height: 29px; background: #eeeff1; display: flex; align-items: center; justify-content: center; font-size: 15px; color: #333; flex: none; }
.g-label .caret { margin-left: 5px; border-left-width: 4px; border-right-width: 4px; border-top-width: 5px; }

.large { display: flex; flex-direction: column; align-items: center; padding-top: 6px; font-size: 15px; flex: none; }
.lg { width: 42px; height: 42px; flex: none; }
.lab { margin-top: 9px; line-height: 20px; white-space: nowrap; }
.lc { margin: 9px 0 0; }
.w75 { width: 75px; padding-left: 1px; } .w57 { width: 57px; } .w54 { width: 54px; } .w55 { width: 55px; } .w53 { width: 53px; } .w77 { width: 77px; } .w85 { width: 85px; }
.w72 { width: 72px; flex: none; } .w97 { width: 97px; flex: none; } .w65 { width: 65px; flex: none; } .w63 { width: 63px; flex: none; }
.ml1 { margin-left: 1px; } .ml2 { margin-left: 2px; } .ml3 { margin-left: 3px; } .ml5 { margin-left: 5px; } .ml8 { margin-left: 8px; }

.col { display: flex; flex-direction: column; }
.row { height: 33.5px; display: flex; align-items: center; font-size: 15px; white-space: nowrap; }
.s { width: 20px; height: 20px; margin-right: 5px; flex: none; }
.s-wide { margin-right: 6px; }
.dis .row { color: #adadad; }
.dis .caret { border-top-color: #b8b8b8; }
.dis .row.on { color: #333; }
.plane { margin: 6px 0 0; width: 42px; height: 30px; margin-bottom: 6px; }
.skt { width: 36px; height: 34px; margin: 3px 0 5px; }
.ex { width: 38px; height: 38px; margin: 2px 0; }
.bnd { width: 44px; }
.redbox { position: absolute; left: 525px; top: 38px; width: 111px; height: 45px; border: 4px solid #fb1515; border-radius: 5px; }

/* main */
.main { flex: 1; display: flex; min-height: 0; }
.panel { width: 322px; background: #eeeff1; display: flex; flex-direction: column; flex: none; padding-bottom: 6px; }
.splitter { width: 4px; background: #dfe1e4; flex: none; }
.ptabs { display: flex; height: 36px; padding-top: 1px; flex: none; }
.ptab { display: flex; align-items: center; font-size: 15px; color: #555; background: #dfe1e3; border: 1px solid #aeb0b2; border-left: 0; padding-bottom: 2px; }
.ptab.cur { background: #eeeff1; border: 0; color: #444; padding-bottom: 2px; }
.pt1 { width: 93px; padding-left: 11px; }
.pt2 { width: 135px; padding-left: 10px; }
.pt3 { width: 94px; padding-left: 10px; }
.pi { width: 18px; height: 22px; margin-right: 9px; flex: none; }
.pi2 { width: 24px; height: 24px; margin-right: 5px; flex: none; }
.phead { height: 35px; display: flex; align-items: center; padding-left: 35px; flex: none; }
.phtitle { font-size: 14.5px; font-weight: 700; color: #444; width: 143px; }
.ph1 { width: 22px; height: 26px; }
.ph2 { width: 20px; height: 26px; margin-left: 12px; }
.ph3 { width: 26px; height: 26px; margin-left: 15px; }
.phead .caret { margin-left: 11px; }
.tree { flex: 1; background: #fff; margin: 0 5px 0 10px; border-top: 1px solid #dcdcdc; }
.node { height: 26px; display: flex; align-items: center; font-size: 15.7px; color: #444; padding-left: 28px; position: relative; white-space: nowrap; }
.node.root { padding-left: 5px; }
.ni-r { width: 18px; height: 18px; margin-right: 7px; }
.ni { width: 21px; height: 20px; margin-right: 6px; flex: none; }
.ins { width: 14px; height: 14px; margin: 0 9px 0 4px; flex: none; }
.tri { position: absolute; left: 11px; top: 8px; width: 0; height: 0; border-top: 5px solid transparent; border-bottom: 5px solid transparent; border-left: 8px solid #7d7d7d; }

.viewport { flex: 1; position: relative; background: #e8eaee; overflow: hidden; }
.scene { position: absolute; left: 0; top: 0; }
.wire path { fill: none; stroke: #81495a; stroke-width: 1.1; }
.wire .dash { stroke-dasharray: 9 3 2 3; }
.arrowh { fill: #81495a; }
.ax { font: 15px "Liberation Mono", monospace; fill: #16161c; }
.dl { font: 18px "Liberation Mono", monospace; fill: #81495a; }
.toolbar { position: absolute; left: 615px; top: 6px; width: 364px; height: 36px; background: #f7f7f7; border: 1px solid #a9a9a9; display: flex; align-items: center; padding-left: 8px; }
.tb { width: 21px; height: 21px; flex: none; margin-right: 11.6px; display: block; }
.tbw { position: relative; display: block; flex: none; }
.corner { position: absolute; right: 9px; bottom: -3px; width: 0; height: 0; border-bottom: 5px solid #666; border-left: 5px solid transparent; }
.press { width: 29px; height: 29px; background: #dcdcdc; border: 1px solid #ababab; display: flex; align-items: center; justify-content: center; flex: none; margin-left: -5px; }
.press.p2 { margin-left: 3px; }
.tbp { width: 24px; height: 24px; }
.note { position: absolute; left: 189px; top: 30px; font-size: 33px; line-height: 44px; color: #fb1d1d; white-space: nowrap; }

/* status */
.status { height: 41px; background: #eeeff1; border-top: 3px solid #a5a5a5; display: flex; align-items: center; position: relative; flex: none; padding-left: 8px; }
.st-press { width: 26px; height: 26px; border: 1px solid #b5b5b5; background: #e8e9eb; display: flex; align-items: center; justify-content: center; flex: none; }
.st-i { width: 16px; height: 20px; }
.st-g { width: 22px; height: 22px; margin-left: 7px; flex: none; }
.st-sq { width: 20px; height: 20px; margin-left: 8px; border: 1px solid #2f7d9c; background: linear-gradient(135deg, #f6f9fb, #c5d9e6); flex: none; }
.st-sep { width: 1px; height: 27px; background: #b5b5b5; margin-left: 13px; flex: none; }
.st-sep2 { width: 1px; height: 31px; background: #b5b5b5; margin-left: 1372px; flex: none; }
.st-sep3 { width: 1px; height: 31px; background: #b5b5b5; margin-left: 49px; flex: none; }
.finder { display: flex; height: 30px; width: 52px; margin-left: 0; border: 1px solid #c2c2c2; background: #f6f6f6; align-items: center; flex: none; }
.st-b { width: 22px; height: 20px; margin-left: 6px; flex: none; }
.fd { height: 28px; margin-left: 5px; padding-left: 3px; border-left: 1px solid #c2c2c2; display: flex; align-items: center; flex: 1; }
.fd .caret { margin-left: 1px; border-left-width: 4px; border-right-width: 4px; border-top-width: 5px; }
.combo { display: flex; align-items: center; width: 205px; height: 28px; margin-left: 114px; border: 1px solid #b5b5b5; background: #f6f6f6; flex: none; }
.ctext { flex: 1; font-size: 15px; padding-left: 9px; color: #333; }
.cbtn { width: 19px; height: 26px; border-left: 1px solid #b5b5b5; display: flex; align-items: center; justify-content: center; flex: none; }
.cbtn .caret { margin: 0; border-left-width: 4px; border-right-width: 4px; border-top-width: 5px; }
.mark { position: absolute; left: 1638px; top: 7px; font: 16px/24px "Liberation Sans", sans-serif; color: rgba(205, 205, 205, .85); text-shadow: 1px 1px 0 rgba(255,255,255,.9); white-space: nowrap; }
```
